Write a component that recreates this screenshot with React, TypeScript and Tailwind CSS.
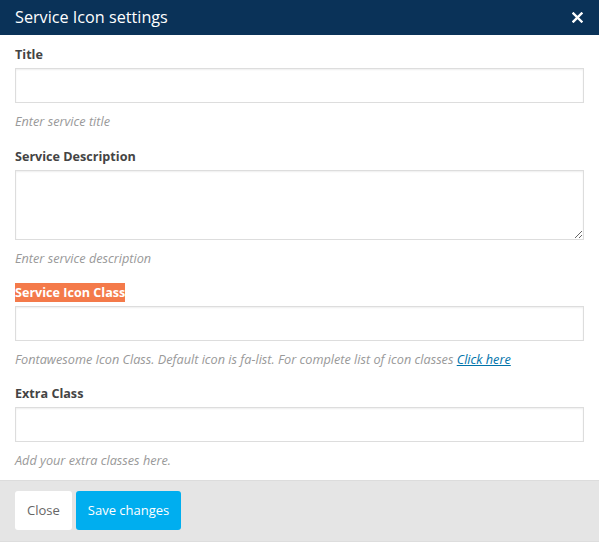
import React from "react";

const font = { fontFamily: '"Open Sans", "Noto Sans", sans-serif' };

function Field({ label, help, highlight, tall, extra }: { label: string; help: React.ReactNode; highlight?: boolean; tall?: boolean; extra?: string }) {
  return (
    <div className={`flex flex-col ${extra ?? ""}`}>
      <div className="h-[20px] flex items-center">
        <span className={`text-[12.6px] font-bold leading-[19px] ${highlight ? "bg-[#f47a4a] text-white" : "text-[#444]"}`}>{label}</span>
      </div>
      <div className="mt-[4px]">
        {tall ? (
          <textarea className="block w-full h-[70px] border border-[#dddddd] shadow-[inset_0_1px_2px_rgba(0,0,0,0.07)] resize-y outline-none" />
        ) : (
          <input className="block w-full h-[35px] border border-[#dddddd] shadow-[inset_0_1px_2px_rgba(0,0,0,0.07)] outline-none" />
        )}
      </div>
      <div className="mt-[9px] text-[12.7px] italic text-[#999] leading-[18px] whitespace-nowrap">{help}</div>
    </div>
  );
}

export default function App() {
  return (
    <div className="w-[599px] h-[542px] bg-white flex flex-col overflow-hidden" style={font}>
      <div className="h-[35px] shrink-0 bg-[#0a3258] flex items-center justify-between pl-[15px] pr-[15px]">
        <span className="text-white text-[16.2px] leading-none">Service Icon settings</span>
        <svg width="11" height="11" viewBox="0 0 11 11" className="mr-[1px]">
          <path d="M1.5 1.5 L9.5 9.5 M9.5 1.5 L1.5 9.5" stroke="#fff" strokeWidth="2.4" strokeLinecap="square" />
        </svg>
      </div>
      <div className="flex-1 px-[15px] pt-[9px] flex flex-col gap-[15px]">
        <Field label="Title" help="Enter service title" extra="mb-[1px]" />
        <Field label="Service Description" help="Enter service description" tall />
        <Field
          label="Service Icon Class"
          highlight
          help={
            <>
              Fontawesome Icon Class. Default icon is fa-list. For complete list of icon classes{" "}
              <a className="text-[#0073aa] underline font-medium" href="#">Click here</a>
            </>
          }
        />
        <Field label="Extra Class" help="Add your extra classes here." />
      </div>
      <div className="h-[62px] shrink-0 bg-[#e5e5e5] border-t border-[#dcdcdc] border-b border-b-[#dddddd] flex items-start pt-[10px] px-[15px] gap-[4px]">
        <button className="h-[39px] px-[12px] bg-white rounded-[3px] text-[13px] text-[#666]">Close</button>
        <button className="h-[39px] px-[12px] bg-[#00aeef] rounded-[3px] text-[13px] text-white">Save changes</button>
      </div>
    </div>
  );
}
